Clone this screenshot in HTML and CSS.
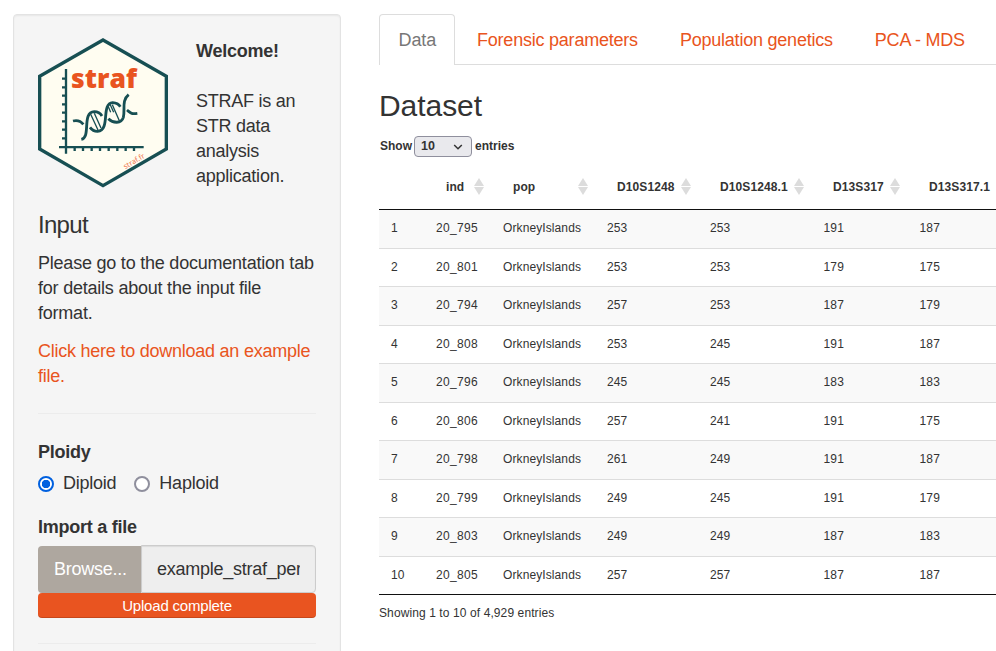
FILE: index.html
```html
<!DOCTYPE html>
<html lang="en">
<head>
<meta charset="utf-8">
<title>STRAF</title>
<link rel="stylesheet" href="styles.css">
</head>
<body>
<div class="page">
  <aside class="sidebar">
    <div class="intro">
      <svg class="logo" viewBox="24 24 390 450" role="img" aria-label="STRAF">
        <path class="hex" d="M219 30 409 139V357L219 467 29 357V139Z"/>
        <g class="ink">
          <path d="M108 117V371M87 351.500H341"/>
          <path d="M96 146H108M96 172H108M96 197H108M96 223H108M96 248H108M96 274H108M96 299H108M96 325H108M134 351V363M159 351V363M185 351V363M210 351V363M236 351V363M262 351V363M287 351V363M312 351V363"/>
        </g>
        <g class="dna">
          <path d="M129 273Q148 268 160 283M154 328C184 322 154 247 193 245Q208 245 216 258M180 292C192 308 215 309 222 289C231 266 221 220 248 218Q264 219 271 230M235 266C249 280 274 282 280 262C286 240 274 211 296 194M291 240C301 248 303 253 322 250"/>
        </g>
        <path class="rungs" d="M182 253 204 300M193 250 213 294M235 230 242 247M240 223 251 247M247 224 268 272"/>
        <text class="logo-name" x="123" y="174" textLength="198" lengthAdjust="spacingAndGlyphs">straf</text>
        <text class="logo-url" x="286" y="418" transform="rotate(-31 286 418)" textLength="70" lengthAdjust="spacingAndGlyphs">straf.fr</text>
      </svg>
      <div class="welcome"><strong>Welcome!</strong><p>STRAF is an<br>STR data<br>analysis<br>application.</p></div>
    </div>
    <h3 class="side-title">Input</h3>
    <p class="text">Please go to the documentation tab<br>for details about the input file<br>format.</p>
    <p class="text"><a class="link" href="#">Click here to download an example<br>file.</a></p>
    <hr class="rule">
    <div class="label">Ploidy</div>
    <div class="radios">
      <label class="radio"><input type="radio" name="ploidy" checked><span>Diploid</span></label>
      <label class="radio"><input type="radio" name="ploidy"><span>Haploid</span></label>
    </div>
    <div class="label">Import a file</div>
    <div class="file"><span class="browse">Browse...</span><div class="filename"><span>example_straf_per</span></div></div>
    <div class="progress">Upload complete</div>
    <hr class="rule last">
  </aside>
  <main class="main">
    <nav class="tabs">
      <a class="tab active" href="#">Data</a>
      <a class="tab" href="#">Forensic parameters</a>
      <a class="tab" href="#">Population genetics</a>
      <a class="tab" href="#">PCA - MDS</a>
    </nav>
    <h2 class="title">Dataset</h2>
    <div class="length">Show
      <span class="select">10<svg viewBox="0 0 10 6" width="10" height="6"><path d="M1.200 1 5 4.800 8.800 1"/></svg></span>
      entries</div>
    <table class="data">
      <colgroup><col class="c0"><col class="c1"><col class="c2"><col class="c3"><col class="c4"><col class="c5"><col class="c6"></colgroup>
      <thead><tr><th></th><th class="sort">ind</th><th class="sort">pop</th><th class="sort">D10S1248</th><th class="sort">D10S1248.1</th><th class="sort">D13S317</th><th class="sort">D13S317.1</th></tr></thead>
      <tbody>
        <tr><td>1</td><td>20_795</td><td>OrkneyIslands</td><td>253</td><td>253</td><td>191</td><td>187</td></tr>
        <tr><td>2</td><td>20_801</td><td>OrkneyIslands</td><td>253</td><td>253</td><td>179</td><td>175</td></tr>
        <tr><td>3</td><td>20_794</td><td>OrkneyIslands</td><td>257</td><td>253</td><td>187</td><td>179</td></tr>
        <tr><td>4</td><td>20_808</td><td>OrkneyIslands</td><td>253</td><td>245</td><td>191</td><td>187</td></tr>
        <tr><td>5</td><td>20_796</td><td>OrkneyIslands</td><td>245</td><td>245</td><td>183</td><td>183</td></tr>
        <tr><td>6</td><td>20_806</td><td>OrkneyIslands</td><td>257</td><td>241</td><td>191</td><td>175</td></tr>
        <tr><td>7</td><td>20_798</td><td>OrkneyIslands</td><td>261</td><td>249</td><td>191</td><td>187</td></tr>
        <tr><td>8</td><td>20_799</td><td>OrkneyIslands</td><td>249</td><td>245</td><td>191</td><td>179</td></tr>
        <tr><td>9</td><td>20_803</td><td>OrkneyIslands</td><td>249</td><td>249</td><td>187</td><td>183</td></tr>
        <tr><td>10</td><td>20_805</td><td>OrkneyIslands</td><td>257</td><td>257</td><td>187</td><td>187</td></tr>
      </tbody>
    </table>
    <div class="info">Showing 1 to 10 of 4,929 entries</div>
  </main>
</div>
</body>
</html>
```
FILE: styles.css
```css
* { box-sizing: border-box; }
body { margin: 0; background: #fff; color: #333; font: 18px/25px "Liberation Sans", Arial, sans-serif; overflow: hidden; }
p, h2, h3 { margin: 0; font-weight: 400; }
a { text-decoration: none; }
.page { display: flex; gap: 38px; height: 651px; overflow: hidden; padding: 14px 0 0 13px; }
.sidebar { flex: none; width: 328px; height: 760px; padding: 23px 24px; background: #f5f5f5; border: 1px solid #e3e3e3; border-radius: 4px; box-shadow: inset 0 1px 2px rgba(0,0,0,.06); white-space: nowrap; letter-spacing: -.24px; }
.intro { display: flex; gap: 28px; }
.logo { flex: none; width: 130px; height: 150px; }
.hex { fill: #fffdf1; stroke: #174f53; stroke-width: 10; }
.ink, .dna, .rungs { fill: none; stroke: #174f53; }
.ink { stroke-width: 7; }
.dna { stroke-width: 8.500; }
.rungs { stroke-width: 4; }
.logo-name { font: 800 78px "Open Sans", "Noto Sans", sans-serif; fill: #e95420; letter-spacing: 0; }
.logo-url { font: 400 22px "Noto Sans", sans-serif; fill: #f07850; letter-spacing: 0; }
.welcome { padding-top: 1px; }
.welcome p { margin-top: 25px; }
.side-title { margin: 22px 0 13px; font-size: 24px; line-height: 27px; letter-spacing: -.7px; }
.text { margin-bottom: 13px; }
.text:first-of-type { letter-spacing: -.22px; }
.link { color: #e95420; }
.rule { height: 1px; margin: 24px 0 26px; border: 0; background: #ececec; }
.label { font-weight: 700; }
.radios { display: flex; gap: 18px; margin: 6px 0 19px; }
.radio { display: flex; gap: 9px; }
.radio input { appearance: none; width: 16px; height: 16px; margin: 5px 0 0; border: 2px solid #8f8f9d; border-radius: 50%; background: #fff; }
.radio input:checked { border-color: #0060df; background: radial-gradient(circle, #0060df 4px, #fff 4.500px); }
.file { display: flex; height: 48px; margin-top: 5px; }
.browse { width: 103px; padding: 11px 0 0 16px; margin-top: 1px; background: #aea79f; color: #fff; border-radius: 4px 0 0 4px; letter-spacing: -.24px; }
.filename { width: 175px; padding: 11px 15px; border: 1px solid #ccc; border-radius: 0 4px 4px 0; background: #eee; box-shadow: inset 0 1px 1px rgba(0,0,0,.08); }
.filename span { display: block; overflow: hidden; letter-spacing: -.25px; }
.progress { height: 25px; border-radius: 4px; background: #e95420; box-shadow: inset 0 -1px 0 rgba(0,0,0,.15); color: #fff; font-size: 15px; text-align: center; letter-spacing: -.2px; }
.rule.last { margin: 25px 0; }
.main { flex: 1; min-width: 0; overflow: hidden; white-space: nowrap; }
.tabs { display: flex; gap: 2px; height: 51px; border-bottom: 1px solid #ddd; letter-spacing: -.22px; }
.tab { height: 51px; padding: 14px 20px 0; color: #e95420; }
.tab.active { width: 76px; padding: 13px 18.500px 0; border: 1px solid #ddd; border-bottom: 0; border-radius: 4px 4px 0 0; background: #fff; color: #777; letter-spacing: -.12px; }
.title { margin-top: 24px; font-size: 30px; line-height: 34px; letter-spacing: -.05px; }
.length { display: flex; align-items: center; height: 21px; margin: 13px 0 0 1px; font-size: 12px; font-weight: 700; gap: 3px; line-height: 21px; }
.select { display: flex; align-items: center; justify-content: space-between; width: 58px; height: 21px; margin-left: -1px; padding: 0 8px 0 6px; border: 1px solid #8f8f9d; border-radius: 4px; background: #e9e9ed; font-size: 12.500px; }
.select path { fill: none; stroke: #333; stroke-width: 1.500; }
.data { table-layout: fixed; width: 650px; border-collapse: separate; border-spacing: 0; font-size: 12px; line-height: 18px; letter-spacing: .1px; border-bottom: 1px solid #111; }
.c0 { width: 45px; } .c1 { width: 67px; } .c2 { width: 104px; } .c3 { width: 103px; } .c4 { width: 113px; } .c5 { width: 96px; } .c6 { width: 122px; }
th { height: 53px; padding: 7px 0 0 22px; text-align: left; border-bottom: 1px solid #111; }
.sort { position: relative; }
.sort::before, .sort::after { content: ""; position: absolute; right: 7px; border: 5px solid transparent; }
.sort::before { top: 21px; border-width: 0 5px 8px; border-bottom-color: #dcdcdc; }
.sort::after { top: 30px; border-width: 8px 5px 0; border-top-color: #dcdcdc; }
td { height: 38.500px; padding: 0 0 1px 12px; border-top: 1px solid #ddd; }
td:nth-child(2) { letter-spacing: .35px; }
td:nth-child(n+6) { padding-left: 12.600px; }
tbody tr:first-child td { height: 37.500px; padding-bottom: 1px; border-top: 0; }
tbody tr:nth-child(odd) { background: #f9f9f9; }
.info { margin-top: 9px; font-size: 12px; line-height: 18px; letter-spacing: .1px; }
```
